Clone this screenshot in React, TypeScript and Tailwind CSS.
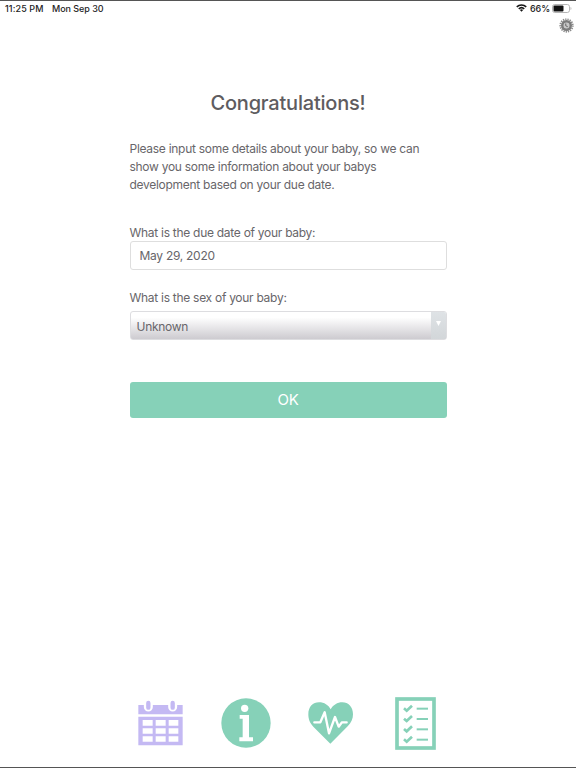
import type { ReactNode } from "react";

const MINT = "#86d1b8";
const LILAC = "#c4b9f3";

function StatusBar() {
  return (
    <header className="flex h-[14px] items-center justify-between pl-[5px] pr-[4px] text-[9px] font-medium leading-none text-[#242424]">
      <div className="flex gap-[8px]">
        <span className="w-[39px] whitespace-nowrap tracking-[0.1px]">11:25 PM</span>
        <span className="whitespace-nowrap tracking-[-0.05px]">Mon Sep 30</span>
      </div>
      <div className="flex items-center">
        <svg className="mr-[3px] h-[8px] w-[11px]" viewBox="0 0 22 16" fill="none" stroke="#151515" strokeWidth="3">
          <path d="M1.5 5.8a13.5 13.5 0 0 1 19 0" />
          <path d="M5.5 9.8a8 8 0 0 1 11 0" />
          <path d="M7.8 12.2a4.5 4.5 0 0 1 6.4 0L11 15.5Z" fill="#151515" stroke="none" />
        </svg>
        <span className="mr-[2px] tracking-[-0.1px]">66%</span>
        <svg className="h-[9px] w-[20px]" viewBox="0 0 20 9">
          <rect x="0.5" y="0.5" width="17" height="8" rx="2.2" fill="none" stroke="#b5b5b5" />
          <rect x="1.5" y="1.5" width="10" height="6" rx="1" fill="#111" />
          <path d="M18.6 3v3c1-.4 1-2.600 0-3Z" fill="#a5a5a5" />
        </svg>
      </div>
    </header>
  );
}

function GearIcon() {
  return (
    <svg className="h-[15px] w-[15px]" viewBox="0 0 30 30" fill="none">
      <circle cx="15" cy="15" r="12.500" stroke="#8a8a8a" strokeWidth="3.500" strokeDasharray="2.600 1.960" />
      <circle cx="15" cy="15" r="8.500" fill="#ccc" stroke="#7b7b7b" strokeWidth="5" />
      <circle cx="15" cy="15" r="5" fill="#c6c6c6" />
      <path d="M13.500 11v4.500l4 2" stroke="#666" strokeWidth="2" />
    </svg>
  );
}

function CalendarIcon() {
  return (
    <svg className="h-[46px] w-[45px]" viewBox="24 30 135 138">
      <path d="M25 45H158V73H25Z" fill={LILAC} />
      <path d="M55 30V51M128 30V51" stroke="#fff" strokeWidth="27" strokeLinecap="round" />
      <path d="M55 39V53M128 39V53" stroke={LILAC} strokeWidth="13" strokeLinecap="round" />
      <path
        d="M25 80H158V166H25ZM38 90V107H68V90ZM77 90V107H107V90ZM116 90V107H145V90ZM38 115V131H68V115ZM77 115V131H107V115ZM116 115V131H145V115ZM38 139V155H68V139ZM77 139V155H107V139ZM116 139V155H145V139Z"
        fill={LILAC}
        fillRule="evenodd"
      />
    </svg>
  );
}

function InfoIcon() {
  return (
    <svg className="h-[50px] w-[50px]" viewBox="31 25 150 150">
      <circle cx="106" cy="100" r="74" fill={MINT} />
      <circle cx="102" cy="56" r="11" fill="#fff" />
      <path d="M87 76H115V143H127V155H86V143H96V87H87Z" fill="#fff" />
    </svg>
  );
}

function HeartIcon() {
  return (
    <svg className="h-[42px] w-[45px]" viewBox="39 37 135 126">
      <path
        d="M106 162L55 111C43 99 40 86 40 74C40 51 54 38 72 38C88 38 100 46 107 59C114 46 127 38 142 38C160 38 174 52 174 74C174 87 169 99 158 110Z"
        fill={MINT}
      />
      <path
        d="M58 98H76L89 68L102 131L120 82L131 111L141 98H155"
        fill="none"
        stroke="#fff"
        strokeWidth="7"
        strokeLinecap="round"
        strokeLinejoin="round"
      />
    </svg>
  );
}

function ChecklistIcon() {
  return (
    <svg className="h-[53px] w-[41px]" viewBox="30 20 123 159" fill="none" stroke={MINT}>
      <rect x="36" y="26" width="111" height="147" strokeWidth="11" />
      {[54, 85, 116, 147].map((y) => (
        <g key={y}>
          <path d={`M57 ${y}L65 ${y + 7}L81 ${y - 8}`} strokeWidth="8" />
          <path d={`M95 ${y + 1}H129`} strokeWidth="6" />
        </g>
      ))}
    </svg>
  );
}

function Tab({ label, children }: { label: string; children: ReactNode }) {
  return (
    <button aria-label={label} className="flex h-[54px] w-[51px] items-center justify-center">
      {children}
    </button>
  );
}

export default function App() {
  return (
    <div className="flex h-screen w-full flex-col overflow-hidden border-y border-[#555] bg-white font-['Inter',sans-serif] text-[#68666a]">
      <StatusBar />
      <div className="flex h-[18px] justify-end pr-[2px] pt-[3px]">
        <button aria-label="Settings" className="h-[15px]">
          <GearIcon />
        </button>
      </div>

      <main className="mx-auto flex w-[317px] flex-1 flex-col pt-[55px] text-[12px] tracking-[-0.28px]">
        <h1 className="text-center text-[20px] font-medium leading-[30px] tracking-[-0.2px] text-[#5e5c60]">
          Congratulations!
        </h1>
        <p className="mt-[22px] whitespace-nowrap leading-[18px]">
          Please input some details about your baby, so we can
          <br />
          show you some information about your babys
          <br />
          development based on your due date.
        </p>

        <label className="mt-[30px] leading-[18px]">What is the due date of your baby:</label>
        <div className="-mt-px flex h-[29px] items-center rounded-[3px] border border-[#dedede] pl-[9px]">
          May 29, 2020
        </div>

        <label className="mt-[19px] leading-[18px]">What is the sex of your baby:</label>
        <div className="mt-[4px] flex h-[29px] shrink-0 overflow-hidden rounded-[3px] border border-[#dddde0] bg-linear-to-b from-white from-20% to-[#cdcbd0]">
          <span className="flex flex-1 items-center pl-[6px] pt-[2px]">Unknown</span>
          <span className="flex w-[15px] justify-center bg-linear-to-b from-[#dfe3e6] to-[#d2d6d9] pt-[9px]">
            <svg className="h-[5px] w-[5px]" viewBox="0 0 5 5">
              <path d="M0 0H5L2.500 5Z" fill="#fff" />
            </svg>
          </span>
        </div>

        <button className="mt-[42px] h-[36px] shrink-0 rounded-[3px] bg-[#86d1b8] pt-px text-[15px] text-white">
          OK
        </button>
      </main>

      <nav className="mx-auto flex w-[306px] justify-between pb-[17px]">
        <Tab label="Calendar">
          <CalendarIcon />
        </Tab>
        <Tab label="Information">
          <InfoIcon />
        </Tab>
        <Tab label="Health">
          <HeartIcon />
        </Tab>
        <Tab label="Checklist">
          <ChecklistIcon />
        </Tab>
      </nav>
    </div>
  );
}
